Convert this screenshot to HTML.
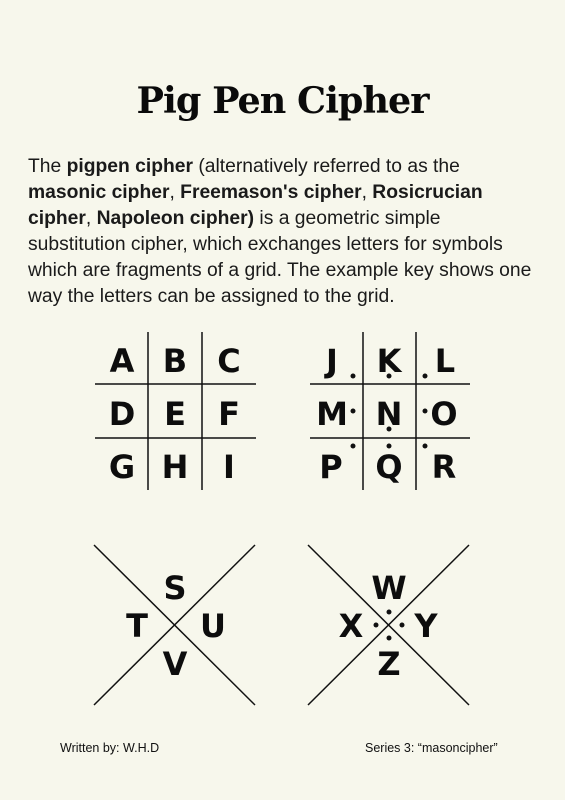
<!DOCTYPE html>
<html><head><meta charset="utf-8"><style>
html,body{margin:0;padding:0}
body{width:565px;height:800px;background:#f7f7ec;position:relative;overflow:hidden;font-family:"Liberation Sans",sans-serif;color:#111}
h1{position:absolute;top:78px;left:0;width:565px;text-align:center;margin:0;font:bold 36.5px/46px "DejaVu Serif",serif;color:#0a0a0a;letter-spacing:-1px}
p{position:absolute;top:154px;left:28px;width:540px;margin:0;font-size:19.3px;line-height:26px;color:#1a1a1a;white-space:nowrap}
.f{position:absolute;top:741px;font-size:12.5px;color:#111}
svg{position:absolute;left:0;top:0}
svg text{font-family:"DejaVu Sans",sans-serif;font-weight:bold;font-size:32px;text-anchor:middle;fill:#0d0d0d}
</style></head><body>
<h1>Pig Pen Cipher</h1>
<p>The <b>pigpen cipher</b> (alternatively referred to as the<br><b>masonic cipher</b>, <b>Freemason's cipher</b>, <b>Rosicrucian</b><br><b>cipher</b>, <b>Napoleon cipher)</b> is a geometric simple<br>substitution cipher, which exchanges letters for symbols<br>which are fragments of a grid. The example key shows one<br>way the letters can be assigned to the grid.</p>
<svg width="565" height="800" viewBox="0 0 565 800">
<g stroke="#111" stroke-width="1.5">
<line x1="148" y1="332" x2="148" y2="490"/><line x1="202" y1="332" x2="202" y2="490"/>
<line x1="95" y1="384" x2="256" y2="384"/><line x1="95" y1="438" x2="256" y2="438"/>
<line x1="363" y1="332" x2="363" y2="490"/><line x1="416" y1="332" x2="416" y2="490"/>
<line x1="310" y1="384" x2="470" y2="384"/><line x1="310" y1="438" x2="470" y2="438"/>
<line x1="94" y1="545" x2="255" y2="705"/><line x1="255" y1="545" x2="94" y2="705"/>
<line x1="308" y1="545" x2="469" y2="705"/><line x1="469" y1="545" x2="308" y2="705"/>
</g>
<g>
<text x="122" y="372">A</text><text x="175" y="372">B</text><text x="229" y="372">C</text>
<text x="122" y="425">D</text><text x="175" y="425">E</text><text x="229" y="425">F</text>
<text x="122" y="478">G</text><text x="175" y="478">H</text><text x="229" y="478">I</text>
<text x="332" y="372">J</text><text x="389" y="372">K</text><text x="445" y="372">L</text>
<text x="332" y="425">M</text><text x="389" y="425">N</text><text x="444" y="425">O</text>
<text x="331" y="478">P</text><text x="389" y="478">Q</text><text x="444" y="478">R</text>
<text x="175" y="599">S</text><text x="137" y="637">T</text><text x="213" y="637">U</text><text x="175" y="675">V</text>
<text x="389" y="599">W</text><text x="351" y="637">X</text><text x="426" y="637">Y</text><text x="389" y="675">Z</text>
</g>
<g fill="#111">
<circle cx="353" cy="376" r="2.5"/><circle cx="389" cy="376" r="2.5"/><circle cx="425" cy="376" r="2.5"/>
<circle cx="353" cy="411" r="2.5"/><circle cx="389" cy="429" r="2.5"/><circle cx="425" cy="411" r="2.5"/>
<circle cx="353" cy="446" r="2.5"/><circle cx="389" cy="446" r="2.5"/><circle cx="425" cy="446" r="2.5"/>
<circle cx="389" cy="612" r="2.5"/><circle cx="376" cy="625" r="2.5"/><circle cx="402" cy="625" r="2.5"/><circle cx="389" cy="638" r="2.5"/>
</g>
</svg>
<div class="f" style="left:60px">Written by: W.H.D</div>
<div class="f" style="left:365px">Series 3: “masoncipher”</div>
</body></html>
